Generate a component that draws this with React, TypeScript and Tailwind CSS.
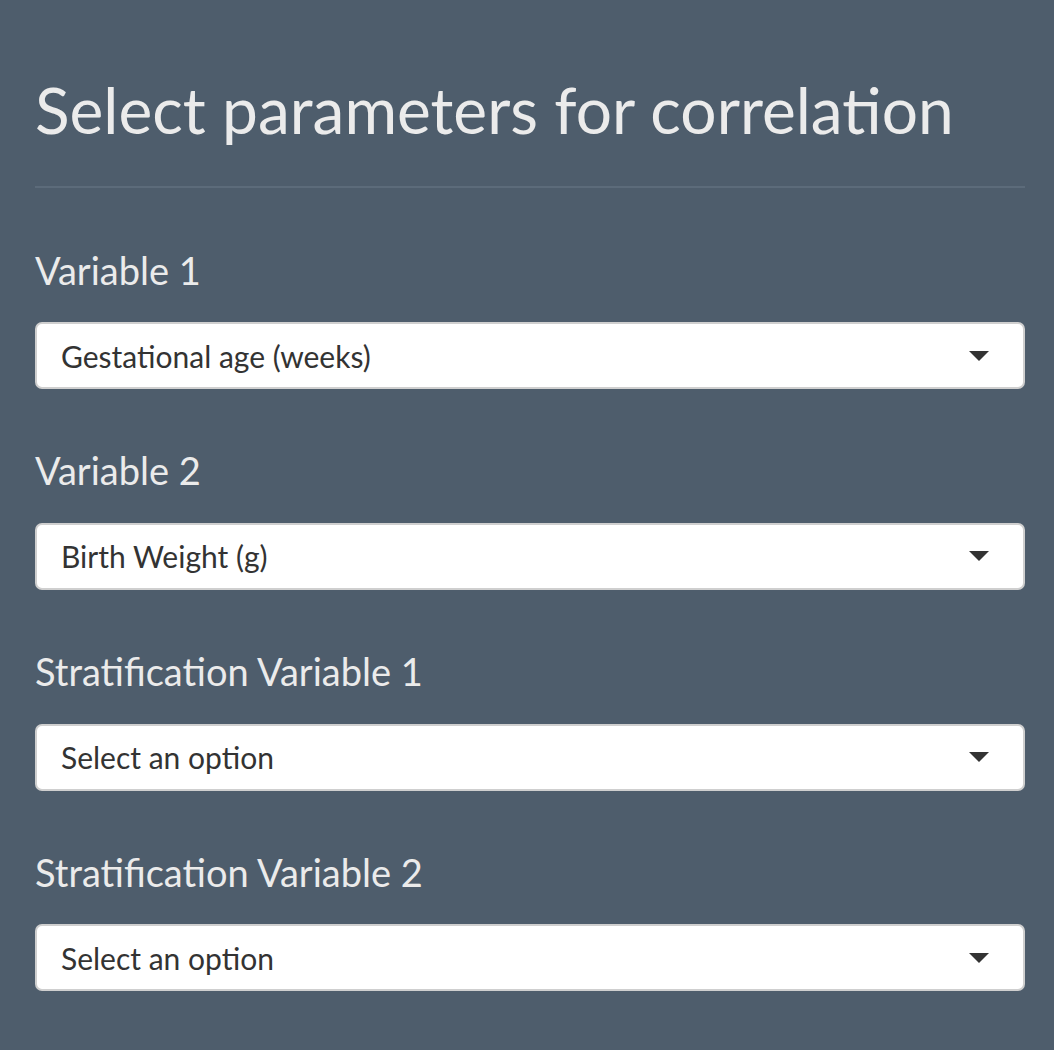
import React from "react";

const fields = [
  { label: "Variable 1", value: "Gestational age (weeks)" },
  { label: "Variable 2", value: "Birth Weight (g)" },
  { label: "Stratification Variable 1", value: "Select an option" },
  { label: "Stratification Variable 2", value: "Select an option" },
];

function Caret() {
  return (
    <svg width="20" height="10" viewBox="0 0 20 10" className="shrink-0">
      <path d="M0 0 L20 0 L10 10 Z" fill="#333333" />
    </svg>
  );
}

function SelectBox({ value }: { value: string }) {
  return (
    <div className="flex h-[67px] w-full items-center justify-between rounded-[7px] border-2 border-[#cfcfcf] bg-white pl-[24px] pr-[34px]">
      <span className="text-[30px] leading-[1.2] text-[#333333]">{value}</span>
      <Caret />
    </div>
  );
}

export default function App() {
  return (
    <div
      className="min-h-[1050px] w-full bg-[#4e5d6c] pb-[60px] pl-[35px] pr-[29px] pt-[72px]"
      style={{ fontFamily: "Lato, 'Open Sans', sans-serif" }}
    >
      <h1 className="text-[64px] leading-[1.2] font-normal text-[#ebebeb]">
        Select parameters for correlation
      </h1>
      <hr className="mt-[37px] border-t-2 border-[#5c6b7a]" />
      <div className="mt-[60px] flex flex-col gap-[59px]">
        {fields.map((f) => (
          <div key={f.label} className="flex flex-col gap-[29px]">
            <label className="text-[38px] leading-[1.2] text-[#ebebeb]">{f.label}</label>
            <SelectBox value={f.value} />
          </div>
        ))}
      </div>
    </div>
  );
}
